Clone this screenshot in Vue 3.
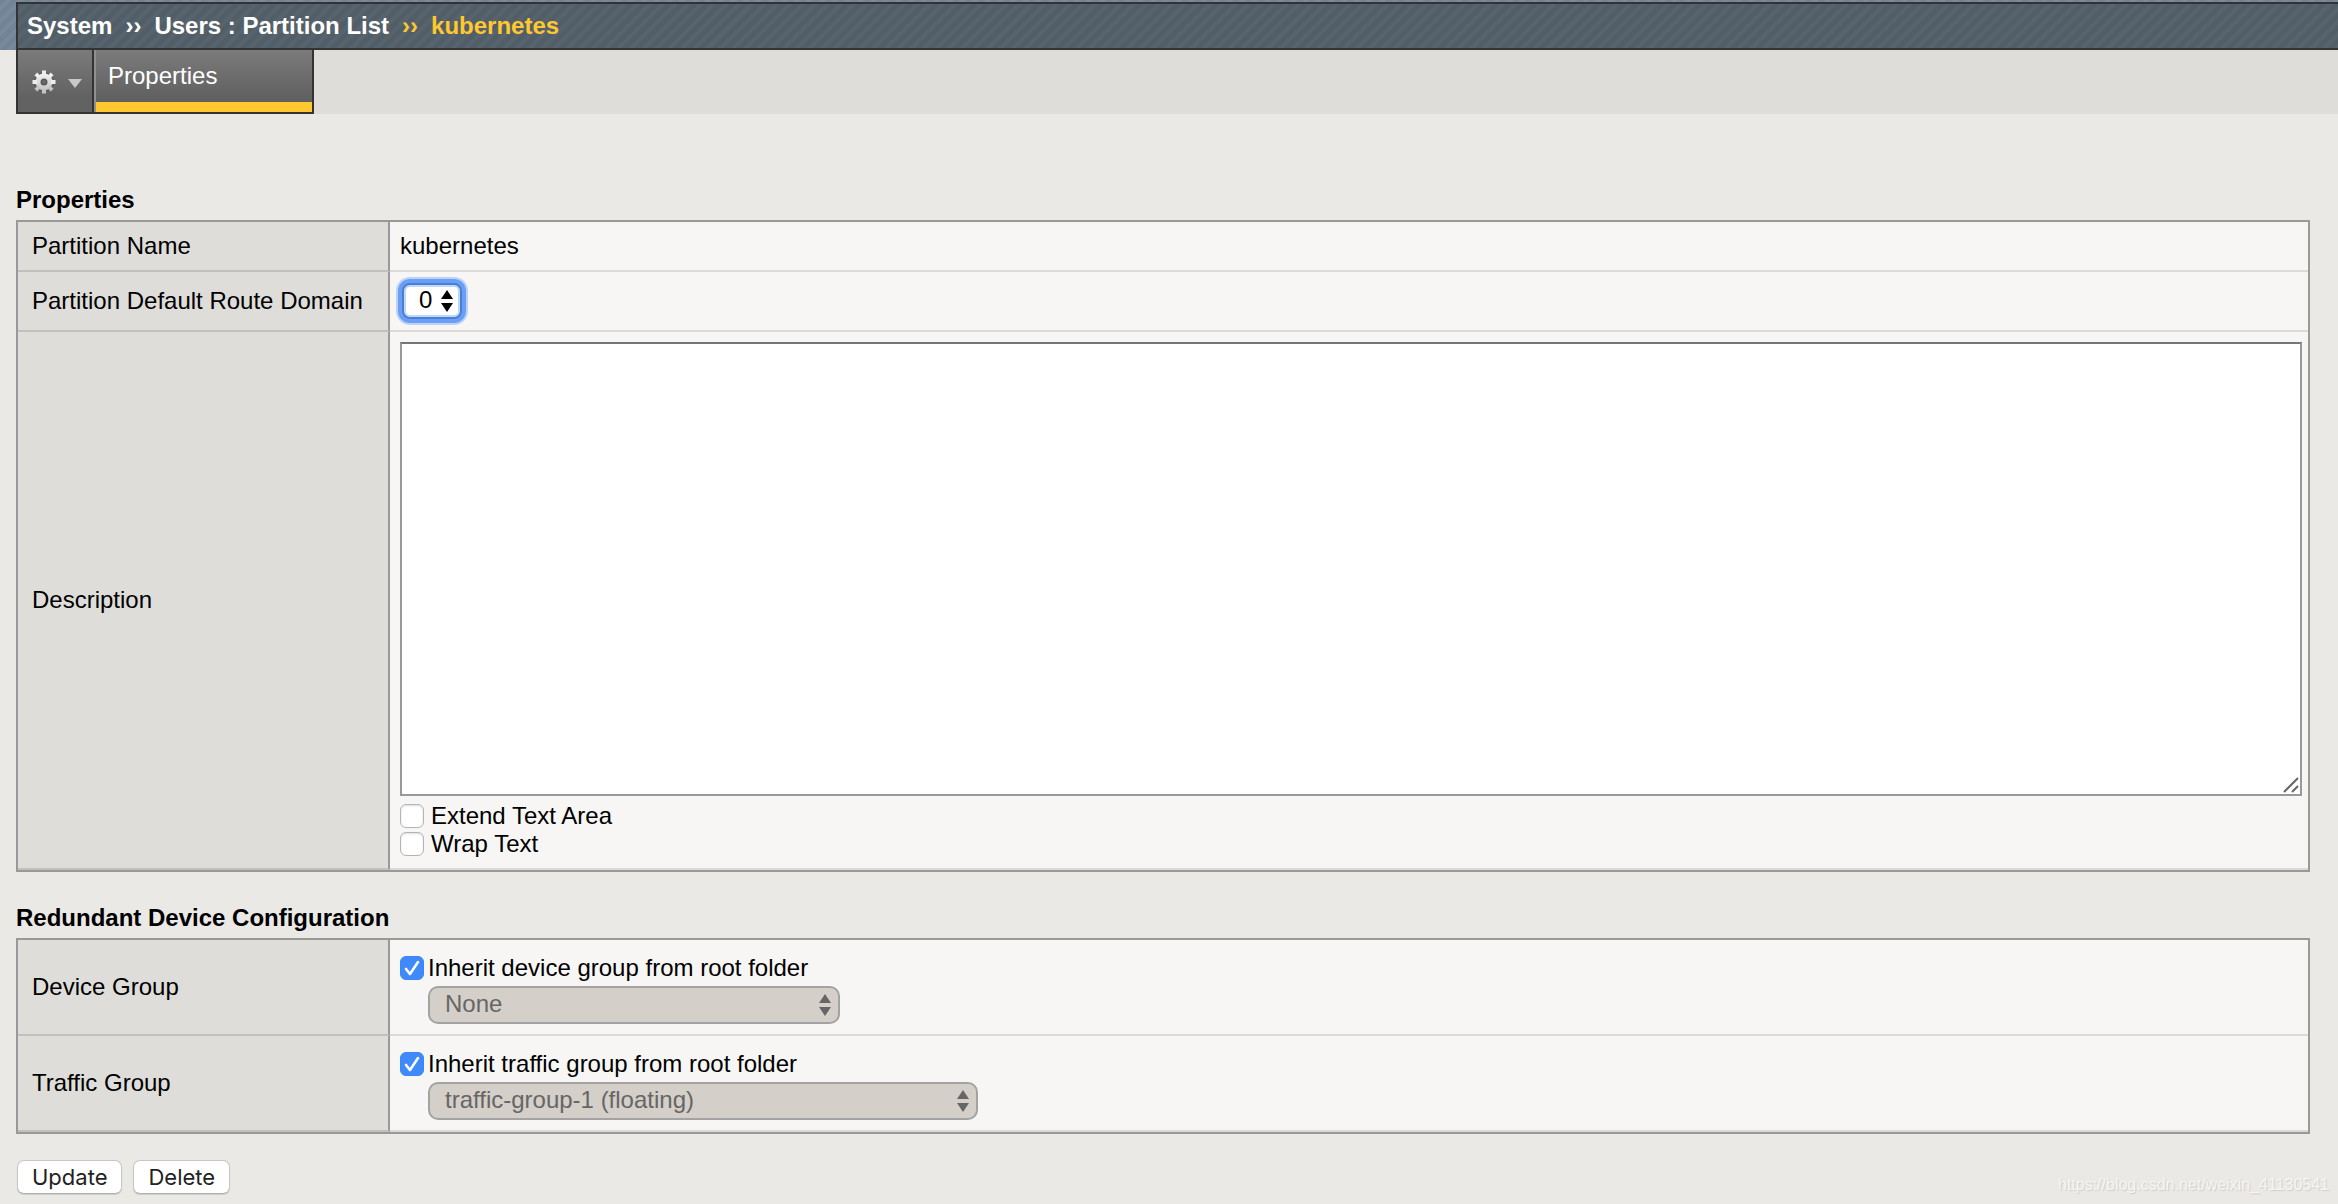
<script setup>
import { ref } from 'vue'

const routeDomain = ref('0')
const description = ref('')
const extendText = ref(false)
const wrapText = ref(false)
const inheritDevice = ref(true)
const inheritTraffic = ref(true)
const teeth = [0, 45, 90, 135, 180, 225, 270, 315]
</script>

<template>
  <div class="page">
    <header class="banner">
      <nav class="crumbs" aria-label="Breadcrumb">
        <span>System</span>
        <span>››</span>
        <span>Users : Partition List</span>
        <span class="current">››</span>
        <span class="current">kubernetes</span>
      </nav>
    </header>

    <div class="tabs">
      <button class="gear" type="button" aria-label="Options">
        <svg width="26" height="26" viewBox="-13 -13 26 26">
          <defs>
            <linearGradient id="gearFill" gradientUnits="userSpaceOnUse" x1="0" y1="-9" x2="0" y2="9">
              <stop offset="0" stop-color="#f4f4f4" />
              <stop offset="1" stop-color="#c2c2c2" />
            </linearGradient>
          </defs>
          <circle r="6" fill="none" stroke="#5a5a5a" stroke-width="8" />
          <circle r="6" fill="none" stroke="url(#gearFill)" stroke-width="5" />
          <path
            v-for="angle in teeth"
            :key="angle"
            d="M-2 -7V-11.500H2V-7Z"
            :fill="angle > 90 && angle < 270 ? '#c4c4c4' : '#eee'"
            :transform="`rotate(${angle})`"
          />
        </svg>
        <svg width="14" height="10" viewBox="0 0 14 10">
          <path fill="#c8c8c8" d="M0 0H14L7 9Z" />
        </svg>
      </button>
      <a class="tab" href="#">Properties</a>
    </div>

    <main>
      <h2>Properties</h2>
      <table>
        <tbody>
          <tr>
            <th scope="row">Partition Name</th>
            <td class="plain">kubernetes</td>
          </tr>
          <tr>
            <th scope="row"><label for="route">Partition Default Route Domain</label></th>
            <td class="route">
              <div class="pick focus">
                <select id="route" v-model="routeDomain">
                  <option>0</option>
                </select>
                <svg width="12" height="22" viewBox="0 0 12 22">
                  <path d="M6 0L12 9H0ZM0 13H12L6 22Z" />
                </svg>
              </div>
            </td>
          </tr>
          <tr>
            <th scope="row"><label for="desc">Description</label></th>
            <td class="desc">
              <div class="area">
                <textarea id="desc" v-model="description"></textarea>
                <svg width="16" height="16" viewBox="0 0 16 16">
                  <path d="M1 15L15 1M9 15L15 9" stroke="#666" stroke-width="2" />
                </svg>
              </div>
              <label class="check loose"><input v-model="extendText" type="checkbox" />Extend Text Area</label>
              <label class="check loose"><input v-model="wrapText" type="checkbox" />Wrap Text</label>
            </td>
          </tr>
        </tbody>
      </table>

      <h2>Redundant Device Configuration</h2>
      <table>
        <tbody>
          <tr>
            <th scope="row"><label for="device">Device Group</label></th>
            <td class="group">
              <label class="check"><input v-model="inheritDevice" type="checkbox" />Inherit device group from root folder</label>
              <div class="pick off device">
                <select id="device" disabled>
                  <option>None</option>
                </select>
                <svg width="12" height="22" viewBox="0 0 12 22">
                  <path d="M6 0L12 9H0ZM0 13H12L6 22Z" />
                </svg>
              </div>
            </td>
          </tr>
          <tr>
            <th scope="row"><label for="traffic">Traffic Group</label></th>
            <td class="group">
              <label class="check"><input v-model="inheritTraffic" type="checkbox" />Inherit traffic group from root folder</label>
              <div class="pick off traffic">
                <select id="traffic" disabled>
                  <option>traffic-group-1 (floating)</option>
                </select>
                <svg width="12" height="22" viewBox="0 0 12 22">
                  <path d="M6 0L12 9H0ZM0 13H12L6 22Z" />
                </svg>
              </div>
            </td>
          </tr>
        </tbody>
      </table>

      <div class="actions">
        <button type="button">Update</button>
        <button type="button">Delete</button>
      </div>
    </main>

    <div class="mark">https://blog.csdn.net/weixin_41130541</div>
  </div>
</template>

<style>
body {
  margin: 0;
  background: #eae9e5;
}
</style>

<style scoped>
* {
  box-sizing: border-box;
}

.page {
  position: relative;
  min-height: 100vh;
  overflow: hidden;
  font: 24px/28px "Liberation Sans", Arial, sans-serif;
  color: #000;
}

.banner {
  padding: 2px 0 0 16px;
  background: repeating-linear-gradient(135deg, #718395 0 3px, #788a9b 5px 7px, #718395 9px);
}

.crumbs {
  display: flex;
  gap: 13px;
  height: 48px;
  padding-left: 9px;
  border: solid #333;
  border-width: 2px 0 2px 2px;
  background: repeating-linear-gradient(135deg, #525e67 0 3px, #57646d 5px 7px, #525e67 9px);
  color: #fff;
  font-weight: bold;
  line-height: 43px;
}

.crumbs .current {
  color: #ffc82e;
}

.tabs {
  display: flex;
  height: 64px;
  margin-left: 16px;
  background: #dedddA;
}

.gear {
  display: flex;
  align-items: center;
  gap: 11px;
  width: 78px;
  padding: 2px 0 0 13px;
  border: solid #333;
  border-width: 0 2px 2px;
  background: linear-gradient(#7b7b7b, #626262 75%);
}

.gear svg {
  flex: none;
}

.gear svg:last-child {
  margin-top: 4px;
}

.tab {
  width: 220px;
  padding: 12px 0 0 14px;
  border: solid #333;
  border-width: 0 2px 2px 0;
  background: linear-gradient(#ffc82e, #ffc82e) 2px bottom / 100% 10px no-repeat,
    linear-gradient(90deg, #909090 2px, transparent 2px),
    linear-gradient(#7b7b7b, #606060 80%);
  color: #fff;
  text-decoration: none;
}

main {
  padding: 72px 28px 0 16px;
}

h2 {
  margin: 0 0 6px;
  font-size: 24px;
  line-height: 28px;
}

table {
  width: 100%;
  margin-bottom: 32px;
  border: 2px solid #999;
  border-spacing: 0;
}

th {
  width: 372px;
  padding: 0 0 0 14px;
  border-right: 2px solid #999;
  border-bottom: 2px solid #c1c0be;
  background: #dedddA;
  font-weight: normal;
  text-align: left;
}

td {
  padding: 0 6px 0 10px;
  border-bottom: 2px solid #dadad8;
  background: #f7f6f4;
}

.plain {
  height: 50px;
}

.route {
  height: 60px;
}

.desc {
  padding-top: 10px;
  padding-bottom: 10px;
}

.area {
  position: relative;
  margin-bottom: 6px;
}

textarea {
  display: block;
  width: 100%;
  height: 454px;
  padding: 4px;
  border: 2px solid #999;
  border-top-color: #767676;
  outline: 0;
  resize: none;
  background: #fff;
  font: inherit;
}

.area svg {
  position: absolute;
  right: 3px;
  bottom: 3px;
}

.check {
  display: flex;
  align-items: center;
  gap: 4px;
  height: 28px;
}

.loose {
  gap: 7px;
}

input {
  width: 24px;
  height: 24px;
  margin: 0;
  appearance: none;
  border: 1px solid #b4b4b4;
  border-radius: 6px;
  background: #fff;
  box-shadow: inset 0 1px 2px #ddd;
}

input:checked {
  border-color: #3b86f7;
  background: #3f8afb url("data:image/svg+xml,%3Csvg xmlns='http://www.w3.org/2000/svg' viewBox='0 0 22 22'%3E%3Cpath d='M5 12l4 5 8-12' fill='none' stroke='white' stroke-width='2.6' stroke-linecap='round' stroke-linejoin='round'/%3E%3C/svg%3E") center / 22px no-repeat;
  box-shadow: none;
}

.pick {
  position: relative;
}

.pick svg {
  position: absolute;
  top: 8px;
  right: 9px;
  pointer-events: none;
}

.pick select {
  display: block;
  width: 100%;
  height: 38px;
  margin: 0;
  padding: 0 0 2px 15px;
  appearance: none;
  border: 2px solid #a3a3a3;
  border-radius: 10px;
  background: #d4cfc8;
  color: #666;
  opacity: 1;
  font: inherit;
}

.off svg {
  fill: #666;
}

.focus {
  width: 60px;
  margin-left: 2px;
}

.focus select {
  height: 36px;
  border: 2px solid #4a80d4;
  border-radius: 8px;
  outline: 0;
  background: #fff;
  box-shadow: inset 0 0 0 2px #bfd7fb, 0 0 0 4px #6a9ff5, 0 0 0 6px #bcd3f8;
  color: #000;
}

.focus svg {
  top: 7px;
}

.group {
  height: 96px;
  padding-top: 4px;
}

.group .pick {
  margin: 4px 0 0 28px;
}

.device {
  width: 412px;
}

.traffic {
  width: 550px;
}

.actions {
  display: flex;
  gap: 11px;
  margin-top: -6px;
  padding-left: 1px;
}

.actions button {
  height: 34px;
  padding: 0 14px;
  border: 1px solid #c6c6c4;
  border-bottom-color: #b0b0ae;
  border-radius: 7px;
  background: #fff;
  box-shadow: 0 1px 1px #ccc;
  color: #222;
  font: 22px/32px Inter, sans-serif;
}

.mark {
  position: absolute;
  right: 9px;
  bottom: 9px;
  color: #f6f6f4;
  font-size: 16px;
  line-height: 20px;
  text-shadow: 1px 1px 1px #ccc;
}
</style>
